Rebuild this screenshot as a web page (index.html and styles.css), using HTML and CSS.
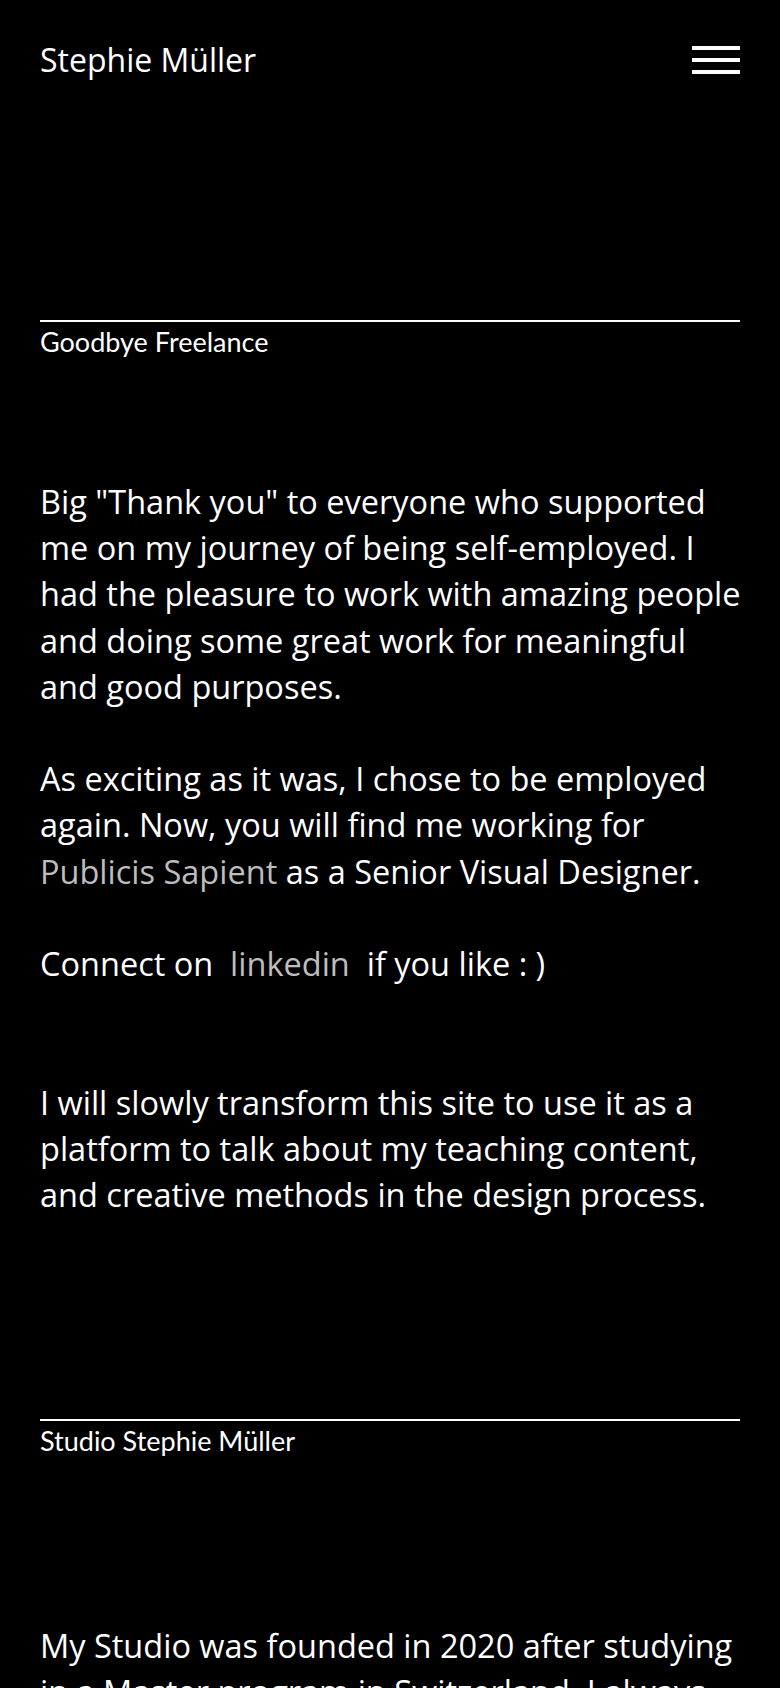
FILE: index.html
```html
<!DOCTYPE html>
<html lang="en">
<head>
<meta charset="utf-8">
<title>Stephie Müller</title>
<link rel="stylesheet" href="styles.css">
</head>
<body>
<header class="site-header">
  <a class="brand" href="#">Stephie Müller</a>
  <button class="menu-btn" aria-label="Menu">
    <span class="bar"></span><span class="bar"></span><span class="bar"></span>
  </button>
</header>

<section class="block block-first">
  <h2 class="block-title">Goodbye Freelance</h2>
  <div class="block-text">
    <p>Big "Thank you" to everyone who supported me on my journey of being self-employed. I had the pleasure to work with amazing people and doing some great work for meaningful and good purposes.</p>
    <p>As exciting as it was, I chose to be employed again. Now, you will find me working for <a class="link" href="#">Publicis Sapient</a> as a Senior Visual Designer.</p>
    <p>Connect on &nbsp;<a class="link" href="#">linkedin</a>&nbsp; if you like : )</p>
    <p class="gap-top">I will slowly transform this site to use it as a platform to talk about my teaching content, and creative methods in the design process.</p>
  </div>
</section>

<section class="block block-second">
  <h2 class="block-title">Studio Stephie Müller</h2>
  <div class="block-text block-text-second">
    <p>My Studio was founded in 2020 after studying in a Master program in Switzerland. I always</p>
  </div>
</section>
</body>
</html>
```
FILE: styles.css
```css
html, body {
  margin: 0;
  padding: 0;
  background: #000;
  color: #fff;
}
body {
  font-family: "Open Sans", "Noto Sans", sans-serif;
  -webkit-font-smoothing: antialiased;
}
.site-header {
  display: flex;
  justify-content: space-between;
  align-items: center;
  padding: 38px 40px 0;
}
.brand {
  color: #fff;
  text-decoration: none;
  font-size: 32px;
  line-height: 44px;
  font-weight: 400;
}
.menu-btn {
  display: flex;
  flex-direction: column;
  gap: 8px;
  width: 48px;
  padding: 0;
  margin: 0;
  border: 0;
  background: none;
  cursor: pointer;
}
.bar {
  display: block;
  height: 4px;
  width: 48px;
  background: #fff;
}
.block {
  margin: 0 40px;
  border-top: 2px solid #fff;
}
.block-first {
  margin-top: 238px;
}
.block-second {
  margin-top: 201px;
}
.block-title {
  margin: 0;
  padding-top: 4px;
  font-family: Lato, "Open Sans", sans-serif;
  font-weight: 400;
  font-size: 27px;
  line-height: 32px;
}
.block-text {
  margin: 121px -5px 0 0;
  font-size: 32.5px;
  line-height: 46.2px;
}
.block-text-second {
  margin-top: 166px;
}
.block-text p {
  margin: 0 0 46.2px;
}
.block-text p.gap-top {
  margin-top: 92.4px;
}
.block-text p:last-child {
  margin-bottom: 0;
}
.link {
  color: #bdbdbd;
  text-decoration: none;
}
```
